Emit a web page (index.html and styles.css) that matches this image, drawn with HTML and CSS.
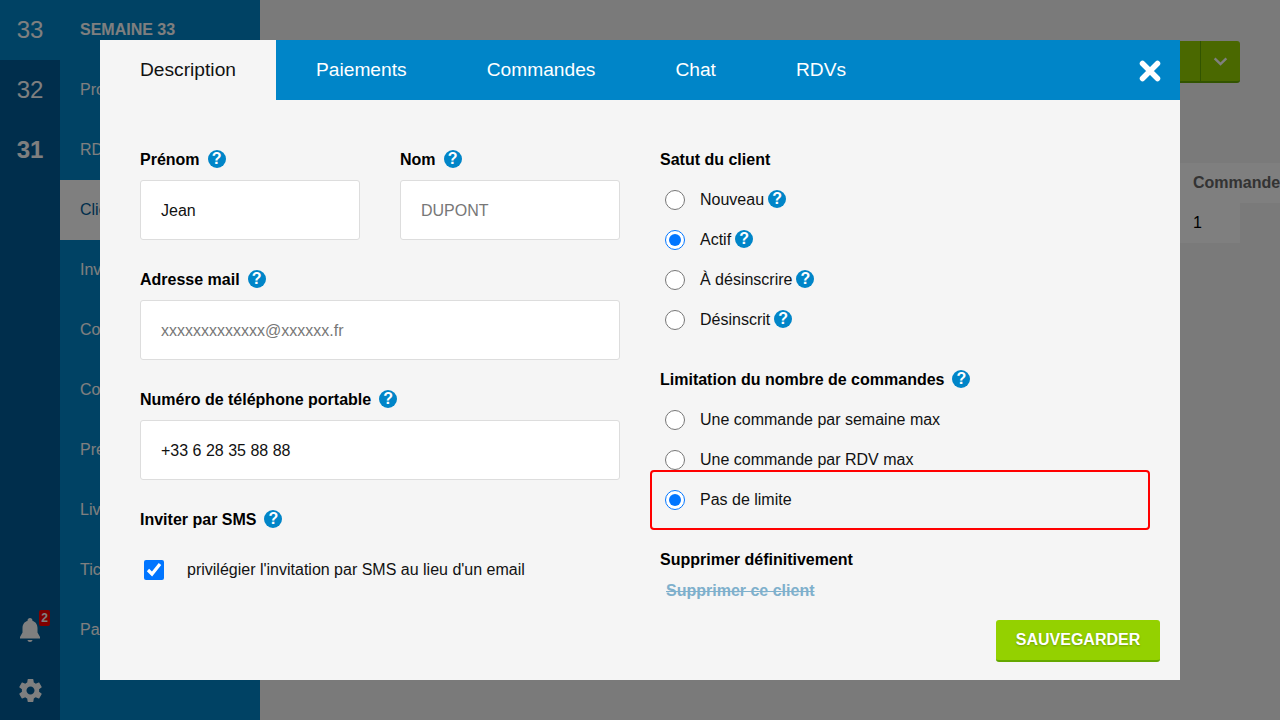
FILE: index.html
```html
<!DOCTYPE html>
<html lang="fr">
<head>
<meta charset="utf-8">
<title>Client</title>
<link rel="stylesheet" href="styles.css">
</head>
<body>
<div class="app">
  <aside class="weeks">
    <div class="week week-current">33</div>
    <div class="week">32</div>
    <div class="week week-bold">31</div>
    <div class="weeks-spacer"></div>
    <div class="side-icon bell">
      <svg viewBox="0 0 20 24" width="20" height="24"><path d="M10 24c1.300 0 2.400-.9 2.500-2h-5c.1 1.100 1.200 2 2.500 2zM17.500 14.500V10c0-3.400-1.900-6.200-5-6.900V2.500C12.500 1.100 11.400 0 10 0S7.500 1.100 7.500 2.500v.6c-3.100.7-5 3.500-5 6.900v4.500L0 19v1.500h20V19z"/></svg>
      <span class="badge">2</span>
    </div>
    <div class="side-icon">
      <svg viewBox="2 2 20 20" width="23" height="23"><path d="M19.430 12.980c.04-.32.07-.64.07-.98s-.03-.66-.07-.98l2.110-1.650c.19-.15.24-.42.12-.64l-2-3.460c-.12-.22-.39-.3-.61-.22l-2.490 1c-.52-.4-1.080-.73-1.690-.98l-.38-2.650C14.460 2.180 14.250 2 14 2h-4c-.25 0-.46.18-.49.42l-.38 2.650c-.61.25-1.170.59-1.690.98l-2.490-1c-.23-.09-.49 0-.61.22l-2 3.460c-.13.22-.07.49.12.64l2.110 1.650c-.04.32-.07.65-.07.98s.03.66.07.98l-2.110 1.650c-.19.15-.24.42-.12.64l2 3.460c.12.22.39.3.61.22l2.490-1c.52.4 1.080.73 1.690.98l.38 2.650c.03.24.24.42.49.42h4c.25 0 .46-.18.49-.42l.38-2.650c.61-.25 1.170-.59 1.690-.98l2.490 1c.23.09.49 0 .61-.22l2-3.460c.12-.22.07-.49-.12-.64l-2.110-1.650zM12 15.500c-1.930 0-3.500-1.570-3.500-3.500s1.570-3.500 3.500-3.500 3.500 1.570 3.500 3.500-1.570 3.500-3.500 3.500z"/></svg>
    </div>
  </aside>
  <nav class="menu">
    <div class="menu-title">SEMAINE 33</div>
    <div class="menu-item">Produits</div>
    <div class="menu-item">RDVs</div>
    <div class="menu-item active">Clients</div>
    <div class="menu-item">Inventaire</div>
    <div class="menu-item">Coupons</div>
    <div class="menu-item">Contacts</div>
    <div class="menu-item">Présentation</div>
    <div class="menu-item">Livraison</div>
    <div class="menu-item">Tickets</div>
    <div class="menu-item">Paramètres</div>
  </nav>
  <main class="content">
    <div class="toolbar">
      <div class="split-button">
        <span class="split-main">Ajouter</span>
        <span class="split-caret">
          <svg viewBox="0 0 16 10" width="15" height="9"><path d="M1.500 1.500 8 8l6.500-6.500" fill="none" stroke="currentColor" stroke-width="2.600"/></svg>
        </span>
      </div>
    </div>
    <div class="table">
      <div class="table-head">Commandes</div>
      <div class="table-cell">1</div>
    </div>
  </main>
</div>

<div class="overlay">
  <section class="modal">
    <header class="tabs">
      <div class="tab tab-active">Description</div>
      <div class="tab">Paiements</div>
      <div class="tab">Commandes</div>
      <div class="tab">Chat</div>
      <div class="tab">RDVs</div>
      <div class="close">
        <svg viewBox="0 0 22 22" width="22" height="22"><path d="M3.500 3.500l15 15M18.500 3.500l-15 15" fill="none" stroke="#fff" stroke-width="5.500" stroke-linecap="round"/></svg>
      </div>
    </header>
    <div class="body">
      <div class="col">
        <div class="pair">
          <div class="field">
            <div class="label">Prénom <span class="help">?</span></div>
            <div class="input">Jean</div>
          </div>
          <div class="field">
            <div class="label">Nom <span class="help">?</span></div>
            <div class="input placeholder">DUPONT</div>
          </div>
        </div>
        <div class="field">
          <div class="label">Adresse mail <span class="help">?</span></div>
          <div class="input placeholder">xxxxxxxxxxxxx@xxxxxx.fr</div>
        </div>
        <div class="field">
          <div class="label">Numéro de téléphone portable <span class="help">?</span></div>
          <div class="input">+33 6 28 35 88 88</div>
        </div>
        <div class="field">
          <div class="label">Inviter par SMS <span class="help">?</span></div>
          <label class="check-row">
            <input type="checkbox" class="check" checked>
            <span>privilégier l'invitation par SMS au lieu d'un email</span>
          </label>
        </div>
      </div>
      <div class="col">
        <div class="group">
          <div class="label">Satut du client</div>
          <div class="radios">
            <label class="radio-row"><input type="radio" name="statut" class="radio"><span>Nouveau</span><span class="help help-near">?</span></label>
            <label class="radio-row"><input type="radio" name="statut" class="radio" checked><span>Actif</span><span class="help help-near">?</span></label>
            <label class="radio-row"><input type="radio" name="statut" class="radio"><span>À désinscrire</span><span class="help help-near">?</span></label>
            <label class="radio-row"><input type="radio" name="statut" class="radio"><span>Désinscrit</span><span class="help help-near">?</span></label>
          </div>
        </div>
        <div class="group">
          <div class="label">Limitation du nombre de commandes <span class="help">?</span></div>
          <div class="radios">
            <label class="radio-row"><input type="radio" name="limite" class="radio"><span>Une commande par semaine max</span></label>
            <label class="radio-row"><input type="radio" name="limite" class="radio"><span>Une commande par RDV max</span></label>
            <label class="radio-row"><input type="radio" name="limite" class="radio" checked><span>Pas de limite</span></label>
          </div>
          <div class="highlight"></div>
        </div>
        <div class="danger">
          <div class="label">Supprimer définitivement</div>
          <div class="danger-link">Supprimer ce client</div>
        </div>
      </div>
    </div>
    <div class="save">SAUVEGARDER</div>
  </section>
</div>
</body>
</html>
```
FILE: styles.css
```css
* { box-sizing: border-box; }
html, body { margin: 0; height: 100%; overflow: hidden; }
body { font-family: "Liberation Sans", Arial, sans-serif; font-size: 16px; color: #212529; background: #f5f5f5; }

.app { display: flex; height: 720px; }

.weeks { width: 60px; flex: none; background: #005c99; color: #fff; display: flex; flex-direction: column; font-size: 24px; }
.week { height: 60px; display: flex; align-items: center; justify-content: center; }
.week-current { background: #0085c8; }
.week-bold { font-weight: 700; }
.weeks-spacer { flex: 1; }
.side-icon { height: 60px; display: flex; align-items: center; justify-content: center; position: relative; }
.side-icon svg { fill: #fff; display: block; }
.badge { position: absolute; top: 10px; left: 39px; width: 11px; height: 16px; border-radius: 2px; background: #f00; color: #fff; font-size: 12px; font-weight: 700; line-height: 16px; text-align: center; }

.menu { width: 200px; flex: none; background: #0085c8; color: #fff; }
.menu-title { height: 60px; padding-left: 20px; display: flex; align-items: center; font-weight: 700; }
.menu-item { height: 60px; padding-left: 20px; display: flex; align-items: center; }
.menu-item.active { background: #fff; color: #005c99; }

.content { flex: 1; min-width: 0; padding-right: 40px; }
.toolbar { height: 163px; padding-top: 41px; display: flex; justify-content: flex-end; }
.split-button { height: 42px; display: flex; background: #94d100; border-bottom: 2px solid #65a800; border-radius: 3px; color: #fff; font-weight: 700; }
.split-main { width: 140px; padding: 10px 16px; }
.split-caret { width: 40px; border-left: 1px solid #65a800; display: flex; align-items: center; justify-content: center; color: #fff; }
.table { margin-left: 920px; width: 60px; }
.table-head { width: 180px; height: 40px; padding: 0 13px; background: #fff; color: #666; font-weight: 700; line-height: 40px; white-space: nowrap; }
.table-cell { height: 40px; padding: 0 13px; background: #fff; color: #000; line-height: 40px; }

.overlay { position: fixed; inset: 0; background: rgba(0, 0, 0, .5); padding: 40px 100px; }
.modal { position: relative; height: 640px; background: #f5f5f5; }

.tabs { height: 60px; display: flex; background: #0085c8; color: #fff; font-size: 19.2px; }
.tab { padding: 0 40px; line-height: 60px; }
.tab-active { background: #f5f5f5; color: #111; }
.close { margin-left: auto; margin-right: 19px; display: flex; align-items: center; padding-top: 2px; }

.body { display: grid; grid-template-columns: 480px 490px; column-gap: 40px; padding: 50px 40px 0; }
.col { min-width: 0; }
.pair { display: grid; grid-template-columns: 220px 220px; column-gap: 40px; }
.field { margin-bottom: 30px; }
.label { height: 20px; line-height: 20px; font-weight: 700; color: #000; display: flex; align-items: center; gap: 8px; white-space: nowrap; }
.help { width: 18px; height: 18px; margin-bottom: 2px; flex: none; border-radius: 50%; background: #0085c8; color: #fff; font-size: 16px; font-weight: 700; line-height: 18px; text-align: center; }
.help-near { margin-left: 4px; }
.input { height: 60px; margin-top: 10px; padding: 0 20px; background: #fff; border: 1px solid #ddd; border-radius: 3px; line-height: 60px; color: #111; }
.placeholder { color: #777; }

.check-row { display: flex; align-items: center; height: 40px; margin-top: 20px; color: #111; }
.check { width: 20px; height: 20px; margin: 0 23px 0 4px; accent-color: #0075ff; }

.group { position: relative; margin-bottom: 30px; }
.radios { margin-top: 10px; color: #111; }
.radio-row { height: 40px; display: flex; align-items: center; padding-left: 5px; }
.radio { width: 20px; height: 20px; margin: 0 15px 0 0; accent-color: #0075ff; }
.highlight { position: absolute; left: -10px; top: 100px; width: 500px; height: 60px; border: 2px solid #f00; border-radius: 4px; }
.danger .label { margin-bottom: 11px; }
.danger-link { padding-left: 6px; line-height: 20px; font-weight: 700; color: #7fb0cc; text-decoration: line-through; }

.save { position: absolute; right: 20px; bottom: 18px; width: 164px; height: 42px; background: #94d100; border-bottom: 2px solid #65a800; border-radius: 3px; color: #fff; font-weight: 700; line-height: 40px; text-align: center; text-shadow: 0 1px 2px rgba(0,0,0,.25); }
```
